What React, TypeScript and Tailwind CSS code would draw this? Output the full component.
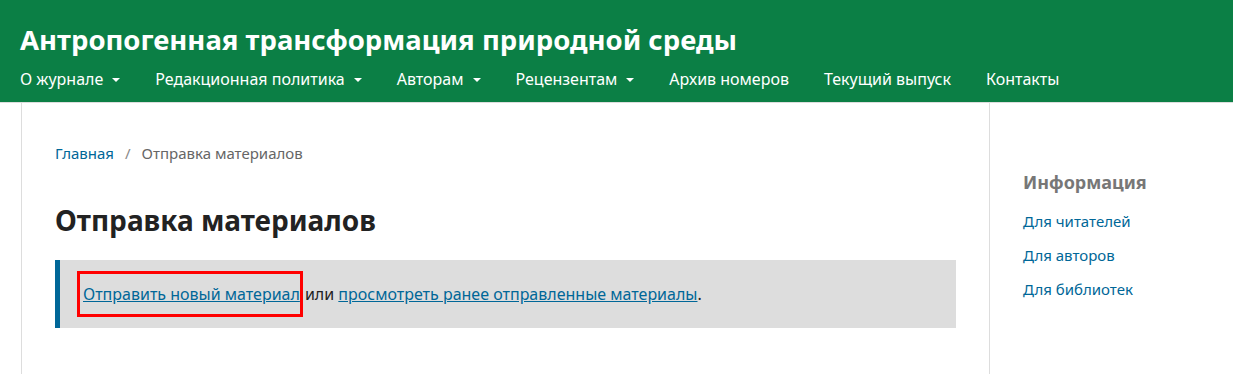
import React from "react";

const Caret = () => (
  <svg width="8" height="4" viewBox="0 0 8 4" className="ml-[9px] mt-[2px]">
    <path d="M0 0 L8 0 L4 4 Z" fill="#ffffff" />
  </svg>
);

const navItems: { label: string; caret: boolean }[] = [
  { label: "О журнале", caret: true },
  { label: "Редакционная политика", caret: true },
  { label: "Авторам", caret: true },
  { label: "Рецензентам", caret: true },
  { label: "Архив номеров", caret: false },
  { label: "Текущий выпуск", caret: false },
  { label: "Контакты", caret: false },
];

export default function App() {
  return (
    <div
      className="w-[1233px] h-[374px] overflow-hidden bg-white"
      style={{ fontFamily: '"Noto Sans", "Open Sans", sans-serif' }}
    >
      <header className="h-[102px] bg-[#0b7f45] border-b border-[#dddddd] box-content">
        <div className="pl-[20px] pt-[19px]">
          <div className="text-[27.5px] leading-[42px] font-bold text-white">
            Антропогенная трансформация природной среды
          </div>
        </div>
        <nav className="flex items-center h-[36px] pl-[20px] gap-[35px] text-[16px] text-white">
          {navItems.map((n) => (
            <div key={n.label} className="flex items-center">
              <span>{n.label}</span>
              {n.caret && <Caret />}
            </div>
          ))}
        </nav>
      </header>
      <div className="flex pl-[21px]">
        <main className="w-[969px] border-l border-r border-[#dddddd] px-[33px] pt-[40px] h-[272px]">
          <nav className="flex items-center text-[15px] leading-[20px]">
            <a className="text-[#006798]">Главная</a>
            <span className="text-[#888888] mx-[11px]">/</span>
            <span className="text-[#666666]">Отправка материалов</span>
          </nav>
          <h1 className="mt-[39px] text-[28px] leading-[36px] font-bold text-[#222222]">
            Отправка материалов
          </h1>
          <div className="mt-[22px] h-[68px] bg-[#dddddd] border-l-[5px] border-[#006798] flex items-center pl-[17px] text-[16px] text-[#222222]">
            <span className="border-[3px] border-[#ff0000] pl-[3px] pr-0 h-[46px] flex items-center">
              <a className="text-[#006798] underline">Отправить новый материал</a>
            </span>
            <span className="ml-[2px]">или&nbsp;</span>
            <a className="text-[#006798] underline">просмотреть ранее отправленные материалы</a>
            <span>.</span>
          </div>
        </main>
        <aside className="pl-[33px] pt-[65px]">
          <div className="text-[18px] leading-[28px] font-bold text-[#777777]">Информация</div>
          <ul className="mt-[15px] flex flex-col gap-[14px] text-[15px] leading-[20px] text-[#006798]">
            <li>Для читателей</li>
            <li>Для авторов</li>
            <li>Для библиотек</li>
          </ul>
        </aside>
      </div>
    </div>
  );
}
